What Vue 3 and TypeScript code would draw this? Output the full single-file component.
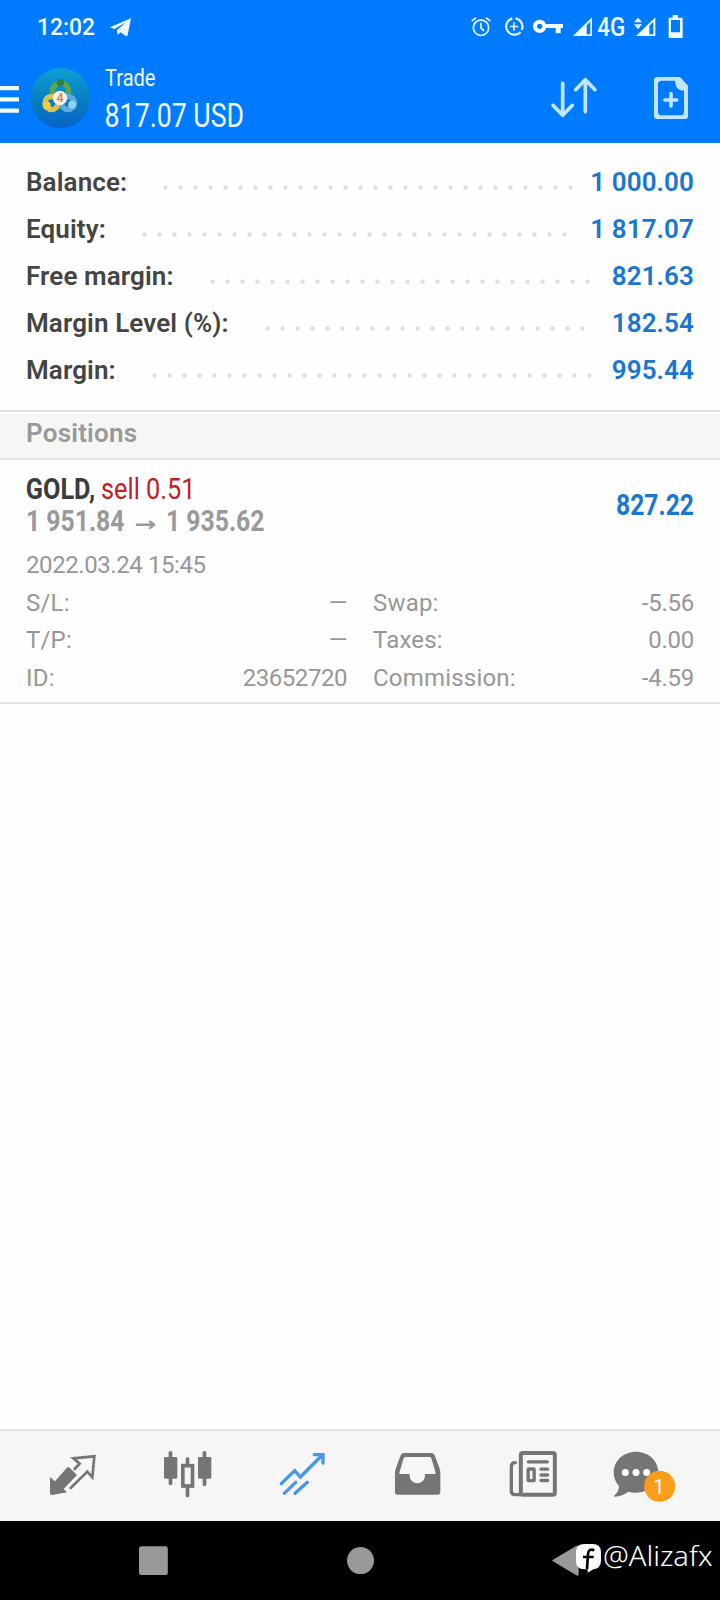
<script setup lang="ts">
interface SummaryRow {
  label: string
  value: string
  dots: number
}

interface Detail {
  label: string
  value: string
}

const DOT_PITCH = 15

const summary: SummaryRow[] = [
  { label: 'Balance:', value: '1 000.00', dots: 28 },
  { label: 'Equity:', value: '1 817.07', dots: 29 },
  { label: 'Free margin:', value: '821.63', dots: 26 },
  { label: 'Margin Level (%):', value: '182.54', dots: 22 },
  { label: 'Margin:', value: '995.44', dots: 30 },
]

const leftDetails: Detail[] = [
  { label: 'S/L:', value: '—' },
  { label: 'T/P:', value: '—' },
  { label: 'ID:', value: '23652720' },
]

const rightDetails: Detail[] = [
  { label: 'Swap:', value: '-5.56' },
  { label: 'Taxes:', value: '0.00' },
  { label: 'Commission:', value: '-4.59' },
]
</script>

<template>
  <div class="screen">
    <header class="top">
      <div class="status">
        <svg class="status-left" width="150" height="52" viewBox="0 0 150 52">
          <text x="37" y="35" font-size="23.5" font-weight="500" textLength="58" lengthAdjust="spacingAndGlyphs">12:02</text>
          <path d="M110 27.2 L131 18.2 L127.5 35.6 Q127 36.8 125.8 36 L120.5 32.2 L117.6 35 L116.8 30.2 L126 22.3 L114.4 29 Z" />
        </svg>
        <svg class="status-right" width="260" height="52" viewBox="-60 0 780 156">
          <g fill="none" stroke="#d4edff" stroke-width="5.500">
            <circle cx="3" cy="83" r="23" />
            <path d="M3 68 V84 L12 93 M-25 63 L-12 53 M31 63 L18 53" />
          </g>
          <g fill="none" stroke="#e2f6ff" stroke-width="6.500">
            <path d="M97 55 A25 25 0 1 0 122 96 M107 55 A25 25 0 0 1 125 90" />
            <path d="M102 67 V92 M89.500 79.500 H114.500" stroke-width="5" />
          </g>
          <circle cx="179" cy="79" r="14" fill="none" stroke="#fff" stroke-width="12" />
          <path d="M196 72 H249 V84 H242 V100 H227 V84 H196 Z" />
          <path fill-rule="evenodd" d="M279 108 L336 52 V108 Z M320 76 L331 65 V103 H320 Z" />
          <text x="352" y="108" font-size="76" font-weight="500" textLength="84" lengthAdjust="spacingAndGlyphs">4G</text>
          <path fill-rule="evenodd" d="M468 108 L526 52 V108 Z M508 77 L520 65 V103 H508 Z" />
          <path d="M462 67 L474 53 L486 67 Z M462 73 H486 L474 88 Z" />
          <path fill-rule="evenodd" d="M566 53 H578 V45 H594 V53 H608 V114 H566 Z M573 60 V97 H600 V60 Z" />
        </svg>
      </div>
      <div class="bar">
        <svg class="menu" width="20" height="90" viewBox="0 52 20 90">
          <path d="M0 86 H19 V90.300 H0 Z M0 97.200 H19 V101.500 H0 Z M0 108.400 H19 V112.700 H0 Z" />
        </svg>
        <svg class="avatar" width="66" height="90" viewBox="28 52 66 90">
          <defs>
            <linearGradient id="sky" x1="0" y1="0" x2="0" y2="1">
              <stop offset="0" stop-color="#0c9fd4" />
              <stop offset=".55" stop-color="#087dc0" />
              <stop offset="1" stop-color="#0863c8" />
            </linearGradient>
          </defs>
          <circle cx="60.500" cy="98" r="30" fill="url(#sky)" />
          <g fill="none" stroke-width="5.500">
            <circle cx="60.500" cy="91" r="8" stroke="#5aa655" />
            <circle cx="51.500" cy="103" r="6.500" stroke="#d6c355" />
            <circle cx="68" cy="103" r="6.500" stroke="#5aaede" />
          </g>
          <circle cx="60.500" cy="82.500" r="3.800" fill="#2f8038" />
          <circle cx="46.800" cy="105.500" r="4" fill="#f0cd45" />
          <circle cx="72" cy="104.500" r="3.800" fill="#8fd4f5" />
          <circle cx="60" cy="98" r="7.200" fill="#f4f2ea" />
          <text x="60" y="102.400" font-size="12.500" font-weight="500" text-anchor="middle" fill="#e87848">4</text>
        </svg>
        <svg class="title" width="180" height="90" viewBox="94 52 180 90">
          <text x="105" y="86" font-size="24.500" textLength="50.500" lengthAdjust="spacingAndGlyphs">Trade</text>
          <text x="104.600" y="127" font-size="32.500" textLength="139.500" lengthAdjust="spacingAndGlyphs">817.07 USD</text>
        </svg>
        <svg class="actions" width="180" height="90" viewBox="540 156 540 270">
          <g fill="none" stroke="#c2e6ff" stroke-width="11" stroke-linecap="round" stroke-linejoin="round">
            <path d="M608 250 V345 M579 316 L608 346 L637 316" />
            <path d="M676 335 V240 M647 269 L676 239 L705 269" />
            <path d="M915 300 H950 M933 281 V318" />
          </g>
          <path fill="#c2e6ff" fill-rule="evenodd" d="M891 231 H960 L984 257 V347 Q984 357 974 357 H891 Q882 357 882 347 V241 Q882 231 891 231 Z M905 242 Q894 242 894 253 V335 Q894 346 905 346 H961 Q972 346 972 335 V272 Q945 272 945 242 Z" />
        </svg>
      </div>
    </header>

    <section class="summary">
      <div v-for="row in summary" :key="row.label" class="summary-row">
        <span class="summary-label">{{ row.label }}</span>
        <span class="leader" :style="{ width: row.dots * DOT_PITCH + 'px' }"></span>
        <span class="summary-value">{{ row.value }}</span>
      </div>
    </section>

    <h2 class="section-title">Positions</h2>

    <article class="position">
      <svg class="deal" width="720" height="84" viewBox="0 460 720 84">
        <text x="25.800" y="499" font-size="29" font-weight="700" fill="#3c3c3c" textLength="69.500" lengthAdjust="spacingAndGlyphs">GOLD,</text>
        <text x="101" y="499" font-size="29" fill="#c22025" textLength="94.500" lengthAdjust="spacingAndGlyphs">sell 0.51</text>
        <g font-size="29" font-weight="700" fill="#999">
          <text x="26" y="531" textLength="98.500" lengthAdjust="spacingAndGlyphs">1 951.84</text>
          <text class="arrow" x="134.500" y="531" font-size="20" textLength="22" lengthAdjust="spacingAndGlyphs">→</text>
          <text x="166" y="531" textLength="98.500" lengthAdjust="spacingAndGlyphs">1 935.62</text>
        </g>
        <text x="616" y="515" font-size="29.500" font-weight="700" fill="#1976d2" textLength="78" lengthAdjust="spacingAndGlyphs">827.22</text>
      </svg>
      <p class="time">2022.03.24 15:45</p>
      <div class="details">
        <dl class="left">
          <div v-for="d in leftDetails" :key="d.label" class="detail">
            <dt>{{ d.label }}</dt>
            <dd>{{ d.value }}</dd>
          </div>
        </dl>
        <dl class="right">
          <div v-for="d in rightDetails" :key="d.label" class="detail">
            <dt>{{ d.label }}</dt>
            <dd>{{ d.value }}</dd>
          </div>
        </dl>
      </div>
    </article>

    <nav class="tabs">
      <svg width="115" height="90" viewBox="15 1431 115 90">
        <g transform="translate(30 1420) scale(.33333)">
          <path d="M60 171 L75 184 L110 144 Q114 139 119 143 L141 165 L101 207 L111 217 L67 225 Q60 226 60 219 Z" />
          <path d="M134 147 L149 131 L130 115 L193 109 L187 172 L172 155 L122 204" class="line" stroke-width="8" />
        </g>
      </svg>
      <svg width="115" height="90" viewBox="130 1431 115 90">
        <g transform="translate(30 1420) scale(.33333)">
          <rect x="402" y="111" width="40" height="65" rx="4" />
          <rect x="416" y="94" width="11" height="101" rx="4" />
          <rect x="504" y="111" width="40" height="65" rx="4" />
          <rect x="518" y="94" width="11" height="104" rx="4" />
          <rect x="458.500" y="137" width="29" height="61" class="line" stroke-width="11" />
          <path d="M467 135 V116 Q467 112 472 112 Q478 112 478 116 V135 Z M467 200 V228 Q467 232 472 232 Q478 232 478 228 V200 Z" />
        </g>
      </svg>
      <svg width="115" height="90" viewBox="245 1431 115 90">
        <g transform="translate(260 1420) scale(.33333)" class="line active" stroke-width="10">
          <path d="M64 191 L104 152 L121 171 L187 105 M163 104 H189 V129 M73 220 L107 187 M105 220 L142 187" />
        </g>
      </svg>
      <svg width="115" height="90" viewBox="360 1431 115 90">
        <g transform="translate(260 1420) scale(.33333)">
          <path fill-rule="evenodd" d="M433 99 H514 Q521 99 524 106 L538 143 Q541 151 541 160 V216 Q541 224 533 224 H413 Q405 224 405 216 V160 Q405 151 408 143 L422 106 Q425 99 433 99 Z M437 111 Q433 111 431 115 L418 158 Q417 162 421 162 H449 V167 A23 23 0 0 0 495 167 V162 H524 Q528 162 527 158 L514 115 Q512 111 508 111 Z" />
        </g>
      </svg>
      <svg width="115" height="90" viewBox="475 1431 115 90">
        <g transform="translate(490 1420) scale(.33333)" class="line">
          <rect x="92.500" y="99" width="102" height="125" rx="6" stroke-width="12" />
          <path d="M76 128 Q64 128 64 140 V213 Q64 224 75 224 H94" stroke-width="10" />
          <path d="M115 125.500 H172" stroke-width="10" />
          <rect x="114.500" y="147" width="18" height="35" rx="1" stroke-width="10" />
          <path d="M153 147.500 H173 M153 165 H173 M153 181.500 H173" stroke-width="10" />
        </g>
      </svg>
      <svg width="115" height="90" viewBox="590 1431 115 90">
        <g transform="translate(490 1420) scale(.33333)">
          <path d="M438 95 C476 95 505 123 505 157 C505 192 476 218 438 218 Q425 218 415 215 Q397 229 374 230 Q370 229 374 226 Q387 213 387 198 Q371 181 371 157 C371 123 400 95 438 95 Z" />
          <g fill="#fff">
            <circle cx="406" cy="157.500" r="10.500" />
            <circle cx="438" cy="157.500" r="10.500" />
            <circle cx="470" cy="157.500" r="10.500" />
          </g>
          <circle cx="509" cy="199" r="46.500" fill="#fb9d1b" />
          <text x="507" y="223" font-size="63" text-anchor="middle" fill="#fff">1</text>
        </g>
      </svg>
    </nav>

    <footer class="system">
      <svg width="720" height="79" viewBox="0 1521 720 79">
        <rect x="139" y="1546.300" width="28.800" height="28.800" rx="2.500" fill="#999" />
        <circle cx="360.500" cy="1560.600" r="13.500" fill="#999" />
        <g transform="translate(520 1515) scale(.33333)">
          <path d="M99 134 L168 93 Q176 89 176 97 V178 Q176 185 169 181 L99 139 Q94 136 99 134 Z" fill="#999" />
          <path d="M193 87 H218 Q243 87 243 112 V137 Q243 160 220 163 L206 172 Q203 174 203 168 V163 H193 Q168 163 168 138 V112 Q168 87 193 87 Z" fill="#fff" />
          <path d="M223 106 Q205 99 204 117 L201 162 M189 126 H221" fill="none" stroke="#000" stroke-width="8" />
        </g>
        <text class="handle" x="603" y="1566" font-size="28" fill="#fff" textLength="109.500" lengthAdjust="spacingAndGlyphs">@Alizafx</text>
      </svg>
    </footer>
  </div>
</template>

<style>
body {
  margin: 0;
  background: #fff;
}
</style>

<style scoped>
.screen {
  display: flex;
  flex-direction: column;
  width: 720px;
  height: 1600px;
  overflow: hidden;
  background: #fefefe;
  font-family: Roboto, 'Liberation Sans', sans-serif;
}
svg {
  display: block;
  flex: none;
}
.top {
  height: 143px;
  background: #007aff;
  fill: #f0fcff;
}
.status {
  display: flex;
  height: 52px;
}
.status-right {
  margin-left: 310px;
}
.bar {
  display: flex;
  height: 90px;
}
.avatar {
  margin-left: 8px;
}
.actions {
  margin-left: auto;
}
.summary {
  padding: 15.500px 26px 0;
  height: 251.500px;
}
.summary-row {
  display: flex;
  height: 47px;
  line-height: 47px;
  font-size: 26px;
  font-weight: 600;
}
.summary-label {
  color: #444;
  letter-spacing: 0.110px;
}
.leader {
  margin: 26px 0 0 31px;
  height: 5px;
  flex: none;
  background: radial-gradient(circle at center, #dedede 1.700px, transparent 2.600px) 0 0 / 15px 5px repeat-x;
}
.summary-value {
  margin-left: auto;
  color: #1976d2;
  letter-spacing: 0.100px;
}
.section-title {
  margin: 0;
  height: 46px;
  padding: 0 26px;
  border-top: 2px solid #e2e2e2;
  border-bottom: 2px solid #e2e2e2;
  background: linear-gradient(#fff 2px, #f6f6f6 2px);
  font-size: 26px;
  line-height: 42px;
  font-weight: 600;
  letter-spacing: 0.200px;
  color: #999;
}
.position {
  height: 242px;
  border-bottom: 2px solid #e2e2e2;
  color: #979797;
  font-size: 24px;
}
.arrow {
  font-family: 'DejaVu Sans', sans-serif;
  font-weight: 700;
}
.time {
  margin: 0;
  padding-left: 26px;
  line-height: 42px;
  letter-spacing: -0.420px;
}
.details {
  display: flex;
  justify-content: space-between;
  margin-top: -1px;
  padding: 0 26px;
}
dl {
  margin: 0;
}
.left,
.right {
  width: 321px;
}
.detail {
  display: flex;
  justify-content: space-between;
  line-height: 37.400px;
}
dt {
  letter-spacing: 0.200px;
}
dd {
  margin: 0;
  letter-spacing: -0.450px;
}
.right dd {
  letter-spacing: -0.250px;
}
.tabs {
  display: flex;
  margin-top: auto;
  height: 90px;
  padding: 0 15px;
  border-top: 2px solid #e2e2e2;
  background: #f6f6f6;
  fill: #757575;
}
.line {
  fill: none;
  stroke: #757575;
  stroke-linecap: round;
}
.active {
  stroke: #4896e8;
}
.system {
  height: 79px;
  background: #000;
}
.handle {
  font-family: 'Noto Sans', sans-serif;
  font-weight: 300;
}
</style>
